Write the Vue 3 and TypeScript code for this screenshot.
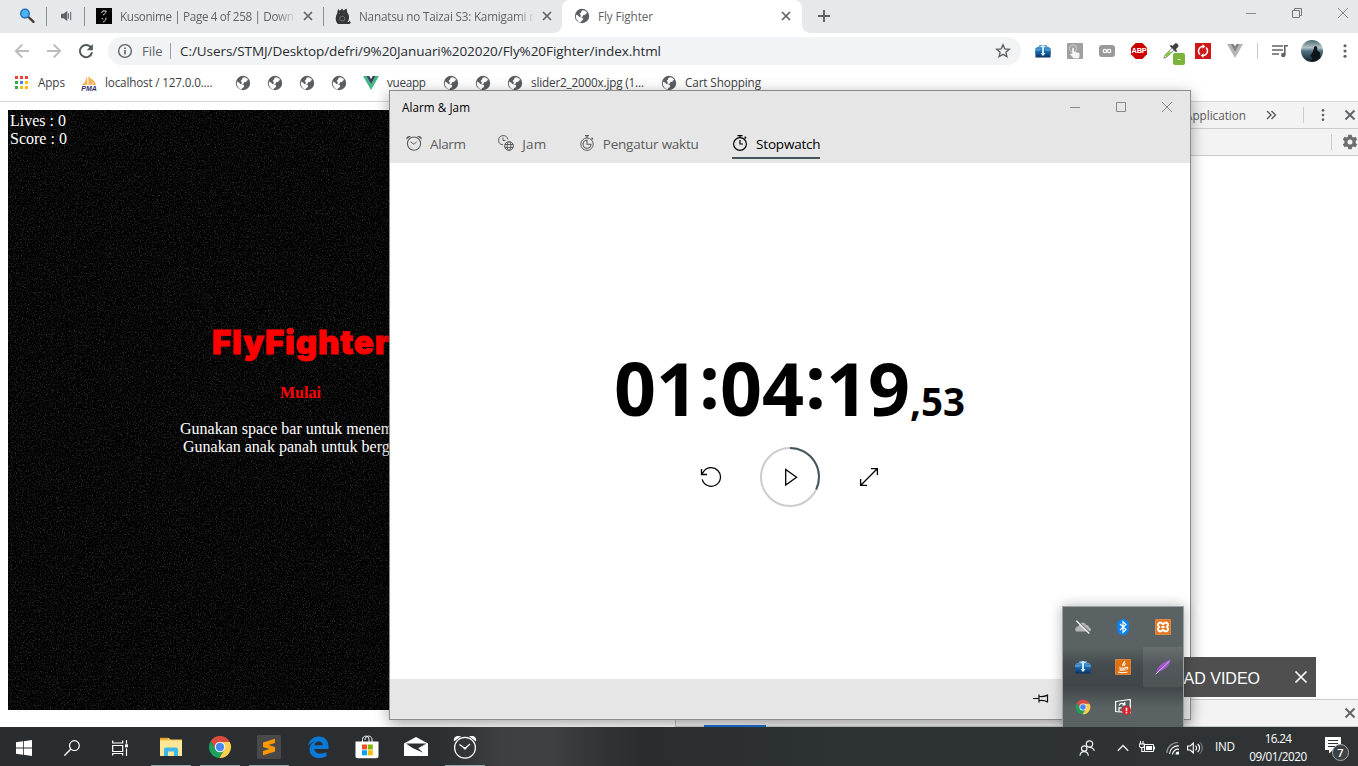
<script setup lang="ts">
import type { Directive } from 'vue'

// Spreads the letters of a label so that it takes exactly the given width.
const vFit: Directive<HTMLElement, number> = {
  mounted(el, { value }) {
    const range = document.createRange()
    range.selectNodeContents(el)
    const natural = range.getBoundingClientRect().width
    const count = (el.textContent ?? '').trim().length
    if (count > 1) el.style.letterSpacing = `${(value - natural) / (count - 1)}px`
  },
}

interface Item { icon?: string; text?: string; width?: number; size?: number }

const bookmarks: Item[] = [
  { icon: 'apps', size: 13 },
  { text: 'Apps', width: 27 },
  { icon: 'pma', size: 16 },
  { text: 'localhost / 127.0.0....', width: 107.5 },
  { icon: 'globe', size: 16 },
  { icon: 'globe', size: 16 },
  { icon: 'globe', size: 16 },
  { icon: 'globe', size: 16 },
  { icon: 'vue', size: 16 },
  { text: 'vueapp', width: 39 },
  { icon: 'globe', size: 16 },
  { icon: 'globe', size: 16 },
  { icon: 'globe', size: 16 },
  { text: 'slider2_2000x.jpg (1...', width: 113 },
  { icon: 'globe', size: 16 },
  { text: 'Cart Shopping', width: 76 },
]

const extensions = ['box', 'touch', 'infinity', 'abp', 'picker', 'reload-red', 'vue-grey']

const clockTabs = [
  { icon: 'alarm', text: 'Alarm', width: 36, active: false },
  { icon: 'worldclock', text: 'Jam', width: 24, active: false },
  { icon: 'timer', text: 'Pengatur waktu', width: 96, active: false },
  { icon: 'stopwatch', text: 'Stopwatch', width: 64.5, active: true },
]

const tray = ['cloud-off', 'bluetooth', 'xampp', 'box', 'java', 'feather', 'chrome', 'update']

const pinned = [
  { icon: 'folder', open: true },
  { icon: 'chrome', open: true },
  { icon: 'sublime', open: true },
  { icon: 'edge', open: false },
  { icon: 'store', open: false },
  { icon: 'mail', open: false },
  { icon: 'alarm-white', open: true },
]
</script>

<template>
  <div class="screen">
    <svg class="defs" width="0" height="0" aria-hidden="true">
      <defs>
        <linearGradient id="gBox" x1="0" y1="0" x2="0" y2="1"><stop offset="0" stop-color="#4a97d2" /><stop offset=".4" stop-color="#1b6bb0" /><stop offset="1" stop-color="#0a2f62" /></linearGradient>
        <linearGradient id="gSky" x1="0" y1="0" x2="0" y2="1"><stop offset="0" stop-color="#4b6870" /><stop offset=".35" stop-color="#b5c4c8" /><stop offset=".5" stop-color="#4f7184" /><stop offset="1" stop-color="#14202b" /></linearGradient>
        <linearGradient id="gSail" x1="0" y1="0" x2="0" y2="1"><stop offset="0" stop-color="#f4a33c" /><stop offset="1" stop-color="#f7b95c" /></linearGradient>
      </defs>
      <symbol id="i-globe" viewBox="0 0 16 16"><circle cx="8" cy="8" r="7.2" fill="#5b5e63" /><path d="M8.7 2.2c1.6-.2 3.7 1 4.6 2.8l-1.4.5-.5 1.2-1.9.4-1 1.7-2 .1.2-2-1.2-1.1 1.3-.7.4-1.600zM1.900 6.600l2.100.9 1.400 1.600 2.700.5 1.300 1.400-.8 1.300-1.400.9-.8 1.300C4 14 1.800 11.400 1.900 8.300z" fill="#fff" /></symbol>
      <symbol id="i-magnifier" viewBox="0 0 16 16"><path d="M9.5 9l5 4.800" stroke="#4b3b34" stroke-width="2.4" stroke-linecap="round" /><circle cx="6" cy="5.600" r="4.300" fill="#4cb3f5" stroke="#2b71b8" stroke-width="1.500" /></symbol>
      <symbol id="i-speaker" viewBox="0 0 16 16"><path d="M3 5.700h2.600l3.700-3v10.600L5.600 10.300H3z" fill="#5f6368" /><path d="M10.500 5.300v5.400M12.700 3.700v8.600" stroke="#6c7075" stroke-width="1.100" fill="none" /></symbol>
      <symbol id="i-kuso" viewBox="0 0 16 16"><path d="M0 0h16v16H0z" fill="#000" /><path d="M7 2.500L5.500 5M7 3h3.200c-.3 2-1.400 3.200-3.200 4M6 10l1 1.500M10 9.700c-.2 2.500-1 3.700-3 4.300" stroke="#ddd" stroke-width="1" fill="none" /></symbol>
      <symbol id="i-cat" viewBox="0 0 16 16"><path d="M3 1l2 1.700 2-2.200 1.500 2L11.500.5l.8 4c2.600 3 2 7 .3 9.500h1.200l.9-1.500 1 2-1 1.500H3C.3 13.500 0 9 2.200 5.500z" fill="#333539" /><path d="M4 5.500h1M8.500 5.200h1M5 9l3-1 2 2-1 3-4-.5z" stroke="#777" stroke-width=".8" fill="none" /></symbol>
      <symbol id="i-x" viewBox="0 0 16 16"><path d="M4 4l8 8M12 4l-8 8" stroke="#5f6368" stroke-width="1.700" fill="none" /></symbol>
      <symbol id="i-plus" viewBox="0 0 16 16"><path d="M8 2v12M2 8h12" stroke="#5f6368" stroke-width="1.900" /></symbol>
      <symbol id="i-min" viewBox="0 0 12 12"><path d="M1 6.500h10" stroke="#8a8a8a" stroke-width="1" /></symbol>
      <symbol id="i-max" viewBox="0 0 12 12"><path d="M1.500 1.500h9v9h-9z" stroke="#888" fill="none" /></symbol>
      <symbol id="i-restore" viewBox="0 0 12 12"><path d="M1.500 3.500h7v7h-7zM3.500 3.500v-2h7v7h-2" stroke="#777" fill="none" /></symbol>
      <symbol id="i-close" viewBox="0 0 12 12"><path d="M1 1l10 10M11 1L1 11" stroke="#888" fill="none" /></symbol>
      <symbol id="i-back" viewBox="0 0 16 16"><path d="M15 8H2M8.300 1.500L1.800 8l6.500 6.500" stroke="#babcbe" stroke-width="1.800" fill="none" /></symbol>
      <symbol id="i-forward" viewBox="0 0 16 16"><path d="M1 8h13M7.700 1.500L14.200 8l-6.500 6.500" stroke="#babcbe" stroke-width="1.800" fill="none" /></symbol>
      <symbol id="i-reload" viewBox="0 0 16 16"><path d="M13.300 5A6.100 6.100 0 1 0 14 9.200" stroke="#54575c" stroke-width="2" fill="none" /><path d="M14.900 1v6.200H8.700z" fill="#54575c" /></symbol>
      <symbol id="i-info" viewBox="0 0 16 16"><circle cx="8" cy="8" r="6.400" stroke="#5f6368" stroke-width="1.400" fill="none" /><path d="M8 7v4.600M8 4.400v1.600" stroke="#5f6368" stroke-width="1.600" /></symbol>
      <symbol id="i-star" viewBox="0 0 16 16"><path d="M8 1.800l1.800 4.100 4.500.4-3.400 2.900 1 4.400L8 11.300l-3.900 2.300 1-4.400-3.400-2.900 4.500-.4z" stroke="#5f6368" stroke-width="1.400" fill="none" /></symbol>
      <symbol id="i-box" viewBox="0 0 16 16"><path d="M3 4.500l1.500-2.500h7L13 4.500z" fill="#5f9cc9" /><path d="M0 6l2-2h12l2 2-.5 8.500H.5z" fill="url(#gBox)" /><path d="M0 7h5.500M10.500 7H16" stroke="#7db9e6" stroke-width=".9" /><path d="M5 3.500L8 2l3 1.500-2 1V10h1.500L8 13.300 5.500 10H7V4.500z" fill="#cdeaff" /></symbol>
      <symbol id="i-touch" viewBox="0 0 16 16"><rect width="16" height="16" rx="1" fill="#a0a0a0" /><circle cx="6" cy="5.500" r="3.600" stroke="#d0d0d0" fill="none" /><path d="M5.200 5.500c0-1.500 1.700-1.500 1.700 0v3.300l4.600.9c1 .3 1.300 1 1.100 2L12 15.300H6.500L3 11.200c0-1 1-1 2.200 0z" fill="#f5f5f5" /></symbol>
      <symbol id="i-infinity" viewBox="0 0 16 16"><rect y="2" width="16" height="12" rx="3" fill="#999" /><circle cx="5.900" cy="8" r="1.700" stroke="#fff" stroke-width="1.200" fill="none" /><circle cx="10.100" cy="8" r="1.700" stroke="#fff" stroke-width="1.200" fill="none" /></symbol>
      <symbol id="i-abp" viewBox="0 0 16 16"><path d="M4.700 0h6.600L16 4.700v6.600L11.300 16H4.700L0 11.300V4.700z" fill="#cb0000" /></symbol>
      <symbol id="i-picker" viewBox="0 0 16 16"><path d="M9.200 5L1.800 12.300.8 15.200l2.900-1 7.400-7.300" stroke="#888" fill="#fff" /><path d="M7.500 9L2.700 13.400" stroke="#7fcc35" stroke-width="2.400" /><path d="M6.800 3l6.200 6.200 1.200-1.200-1.400-1.700 2.300-2.200C16.500 2.300 13.800-.5 12 .6L9.500 3 8 1.800z" fill="#3e403e" /></symbol>
      <symbol id="i-reload-red" viewBox="0 0 16 16"><path d="M0 0h16v16H0z" fill="#cf1717" /><path d="M5 11.400A4.600 4.600 0 0 1 8 3.400M11 4.600a4.600 4.600 0 0 1-3 8" stroke="#fff" stroke-width="1.400" fill="none" /><path d="M7.500 1v4.800L10.300 3.400zM8.500 15v-4.800L5.700 12.600z" fill="#fff" /></symbol>
      <symbol id="i-vue-grey" viewBox="0 0 16 16"><path d="M0 1h3.500L8 9l4.500-8H16L8 15z" fill="#b5b5b5" /><path d="M3.500 1h3L8 3.600 9.500 1h3L8 9z" fill="#808080" /></symbol>
      <symbol id="i-vue" viewBox="0 0 16 16"><path d="M0 1h3.300L8 9.200 12.700 1H16L8 15z" fill="#41b883" /><path d="M3.300 1h3L8 4l1.700-3h3L8 9.200z" fill="#35495e" /></symbol>
      <symbol id="i-playlist" viewBox="0 0 18 16"><path d="M1 3h11M1 7h11M1 11h7" stroke="#5f6368" stroke-width="1.600" /><path d="M13.800 12V2.800H17" stroke="#5f6368" stroke-width="1.600" fill="none" /><circle cx="12.300" cy="12" r="2.200" fill="#5f6368" /></symbol>
      <symbol id="i-avatar" viewBox="0 0 22 22"><circle cx="11" cy="11" r="11" fill="url(#gSky)" /><path d="M13 8.500c-.8-2.700 3.300-3.300 3.300-.5l-.2 2.200 2.900 2.300.4 5.500L14 21l-3.500.6.500-4-2-1.600 2.500-3.500z" fill="#10151c" /></symbol>
      <symbol id="i-dots" viewBox="0 0 16 16"><circle cx="8" cy="2.700" r="1.550" fill="#5f6368" /><circle cx="8" cy="8" r="1.550" fill="#5f6368" /><circle cx="8" cy="13.300" r="1.550" fill="#5f6368" /></symbol>
      <symbol id="i-apps" viewBox="0 0 13 13"><path d="M0 0h3v3H0zM5 0h3v3H5zM10 0h3v3h-3z" fill="#ea4335" /><path d="M0 5h3v3H0z" fill="#34a853" /><path d="M5 5h3v3H5z" fill="#4285f4" /><path d="M10 5h3v3h-3zM5 10h3v3H5zM10 10h3v3h-3z" fill="#fbbc05" /><path d="M0 10h3v3H0z" fill="#34a853" /></symbol>
      <symbol id="i-pma" viewBox="0 0 16 16"><path d="M6 .5C5.800 4 4 7.500.8 10H6.500zM7.500 1c3 3 4 6 3.600 9H7.500zM10 3.500c3 1.500 4.500 4 5 6.500h-3z" fill="url(#gSail)" /></symbol>
      <symbol id="i-gear" viewBox="0 0 16 16"><path d="M6.300.8h3.400l.4 2 1.400.8 2-.8 1.700 2.800L13.600 7v2l1.600 1.400-1.700 2.800-2-.8-1.400.8-.4 2H6.300l-.4-2-1.400-.8-2 .8L.8 10.400 2.400 9V7L.8 5.600l1.700-2.800 2 .8 1.400-.8z" fill="#6e6e6e" /><circle cx="8" cy="8" r="2.500" fill="#f3f3f3" /></symbol>
      <symbol id="i-more" viewBox="0 0 12 12"><path d="M2 2l4 4-4 4M6.500 2l4 4-4 4" stroke="#5a5a5a" stroke-width="1.400" fill="none" /></symbol>

      <symbol id="i-alarm" viewBox="0 0 16 16"><circle cx="8" cy="8.600" r="6.600" stroke="currentColor" stroke-width="1.100" fill="none" /><path d="M4.500 6.800L8 9.300l2.800-2.800" stroke="currentColor" fill="none" /><path d="M.4 4.500C-.2 2 1.800.3 5 1.300zM15.600 4.500c.6-2.500-1.400-4.200-4.600-3.200z" fill="currentColor" /></symbol>
      <symbol id="i-worldclock" viewBox="0 0 16 16"><path d="M5 9.800A4.600 4.600 0 1 1 9.800 4.500M5 2.500v3h2.500" stroke="currentColor" fill="none" /><g stroke="currentColor" fill="none"><circle cx="11" cy="11" r="4.400" /><ellipse cx="11" cy="11" rx="1.900" ry="4.400" /><path d="M6.800 9.500h8.400M6.800 12.500h8.400" /></g></symbol>
      <symbol id="i-timer" viewBox="0 0 16 16"><circle cx="8" cy="9.200" r="6.200" stroke="currentColor" fill="none" /><path d="M8 5.200a4 4 0 1 0 4 4H8zM6 .6h4M8 .6V3M12.600 2.700l1.500 1.500M12.300 4.400l1-1" stroke="currentColor" stroke-width="1.100" fill="none" /></symbol>
      <symbol id="i-stopwatch" viewBox="0 0 16 16"><circle cx="8" cy="9" r="6.400" stroke="currentColor" stroke-width="1.150" fill="none" /><path d="M8 5v4h3M5.500.7h5M8 .7v2M12.500 3.500l1-1M12.700 1.700l1.500 1.500" stroke="currentColor" stroke-width="1.200" fill="none" /></symbol>
      <symbol id="i-reset" viewBox="0 0 22 22"><path d="M2.200 13.300A9.300 9.300 0 1 0 3.200 6.200L1.500 8.400M1.500 3v5.500H7" stroke="#000" stroke-width="1.300" fill="none" /></symbol>
      <symbol id="i-play" viewBox="0 0 60 60"><circle cx="30" cy="30" r="29" stroke="#ccc" stroke-width="2" fill="none" /><path d="M30 1a29 29 0 0 1 26.200 41.400" stroke="#46545b" stroke-width="2" fill="none" /><path d="M25.700 22.500v15.600L36.600 30.300z" stroke="#000" stroke-width="1.300" fill="none" /></symbol>
      <symbol id="i-expand" viewBox="0 0 20 20"><path d="M1.800 18.200L18.200 1.800M12 1.600h6.400V8M1.600 12v6.400H8" stroke="#000" stroke-width="1.300" fill="none" /></symbol>
      <symbol id="i-pin" viewBox="0 0 16 12"><path d="M0 5.500h6M6 1.500v8M6 3.200c2 .6 5 .6 8.500-1.100v6.800C11 7.200 8 7.200 6 7.800" stroke="#111" stroke-width="1.200" fill="none" /></symbol>

      <symbol id="i-cloud-off" viewBox="0 0 16 16"><path d="M1 12.500c-1.800-2.500.2-5.500 2.500-5.300C4.500 2.800 9.500 2.500 11 6c2.500-.2 2.800 1.200 2.600 2.200 2.600.3 3 2.800 1.400 4.300z" fill="#b4b6b6" /><path d="M2.300 1.700l13 12.300" stroke="#5d6466" stroke-width="1.200" /><path d="M1.300 1.800l13 12.700" stroke="#f2f2f2" stroke-width="1.300" /></symbol>
      <symbol id="i-bluetooth" viewBox="0 0 16 16"><rect x="2" width="12" height="16" rx="6" fill="#0a83f0" /><path d="M5 5l6 5.600L8 13.300V2.700L11 5.400 5 11" stroke="#fff" stroke-width="1.200" fill="none" /></symbol>
      <symbol id="i-xampp" viewBox="0 0 16 16"><rect x=".3" y=".3" width="15.400" height="15.400" rx="1" fill="#e87722" stroke="#f2a45e" stroke-width=".6" /><path d="M4.300 3.800h1.900L8 5.300l1.800-1.500h1.900L13 5.200v1.300L11.800 8 13 9.500v1.300l-1.300 1.400H9.800L8 10.700l-1.800 1.500H4.300L3 10.800V9.500L4.200 8 3 6.500V5.200zM6.500 8h3" stroke="#fff" stroke-width="1.900" fill="none" /></symbol>
      <symbol id="i-java" viewBox="0 0 16 16"><rect x=".3" y=".3" width="15.400" height="15.400" rx="1" fill="#e2700e" stroke="#f5a25a" stroke-width=".6" /><path d="M9.600 2c.5 1.500-3 2.600-1.700 5M10.700 4.500c-2 1-1.500 1.700-1 2.500M4 8.500c2 1 5 .7 7 .1M4.500 10.600c2 .7 4 .6 6 .1M3 13c3 1 7 .7 9.500 0M11 8.500c2.500-.7 2 1.600.5 2" stroke="#fff" stroke-width="1.150" fill="none" /></symbol>
      <symbol id="i-feather" viewBox="0 0 16 16"><path d="M.8 15.200C1.500 8 7.500 3 15.300.6c.2 6.400-5.500 11.500-12.200 11.700z" fill="#9a58c6" /><path d="M.8 15.200L14.500 2" stroke="#e0b8f2" stroke-width="1" /></symbol>
      <symbol id="i-chrome" viewBox="0 0 24 24"><path d="M2.770 6A11 11 0 0 1 21.800 7H12l-4.330 7.500z" fill="#dd4b3e" /><path d="M2.770 6a11 11 0 0 0 8.660 17l4.900-8.500H7.670z" fill="#1fa15d" /><path d="M21.800 7a11 11 0 0 1-10.370 16l4.900-8.500L12 7z" fill="#fed04f" /><circle cx="12" cy="12" r="5.300" fill="#f4f4f4" /><circle cx="12" cy="12" r="4.200" fill="#4688f1" /></symbol>
      <symbol id="i-update" viewBox="0 0 16 16"><path d="M.6 2.500l14.700-2v13L.6 12.500z" stroke="#fff" stroke-width="1.200" fill="none" /><path d="M4 6.500c1-2.500 4-2.700 5.500-1M9.800 3v3H7.200M4 12V8.800h2.700" stroke="#fff" stroke-width="1.200" fill="none" /><circle cx="11.500" cy="11.500" r="4.500" fill="#d9202c" /><path d="M11.500 8.800v3.400M11.500 13v1.400" stroke="#fff" stroke-width="1.500" /></symbol>

      <symbol id="i-windows" viewBox="0 0 16 16"><path d="M0 2.300l7-1v6.300H0zM7.800 1.200L16 0v7.600H7.800zM0 8.400h7v6.300l-7-1zM7.800 8.400H16V16l-8.200-1.200z" fill="#fff" /></symbol>
      <symbol id="i-search" viewBox="0 0 16 16"><circle cx="10.400" cy="5.600" r="4.900" stroke="#fff" stroke-width="1.200" fill="none" /><path d="M6.900 9.100L.4 15.600" stroke="#fff" stroke-width="1.400" /></symbol>
      <symbol id="i-taskview" viewBox="0 0 16 16"><path d="M.7.500V3h10V.5M.7 5.500h10v6H.7zM.7 15.500V13.500h10v2M14.500 0v3.800M14.500 8.500V16" stroke="#fff" stroke-width="1.200" fill="none" /><path d="M13 4.300h3v3h-3z" fill="#fff" /></symbol>
      <symbol id="i-folder" viewBox="0 0 24 24"><path d="M1 3h9l1.500 1.500H23V21H1z" fill="#f3c74f" /><path d="M1 5.500h22V21H1z" fill="#ffe797" /><path d="M1 3.500h8M4 3.700h2" stroke="#e49d23" stroke-width="1.400" /><path d="M5 14.500q0-2 2-2h10q2 0 2 2V21h-4v-4.500H9V21H5z" fill="#3cb7ec" /></symbol>
      <symbol id="i-sublime" viewBox="0 0 24 24"><rect width="24" height="24" rx="1.500" fill="#4a4949" /><path d="M6 7.500l12-3.700v4.100l-6.500 2 6.500 2.100v4.500L6 20.300v-4.200l6.500-2L6 12z" fill="#ff9800" /></symbol>
      <symbol id="i-edge" viewBox="0 0 24 24"><path d="M2 11.200C3 5 7.200 1.500 12.800 1.500c6 0 9.700 4.100 9.700 9.700v2.700H8.300c.2 5.200 8.200 5.600 12.200 3.100v4.300c-7 3.800-17 1.600-17-6.900 0-4.100 2.600-7.200 6.400-8.200C6.600 6.400 4 8.200 2 11.200zm6.500-1h8.200c0-5-7.400-4.800-8.200 0z" fill="#0a78d7" /></symbol>
      <symbol id="i-store" viewBox="0 0 24 24"><path d="M7.500 7V4.500C7.500 0 14 0 14 4.500V7M10 5C10-.2 17 0 17 4.500V7" stroke="#fff" stroke-width="1" fill="none" /><path d="M.5 6.500h23v14.800q0 2-2 2h-19q-2 0-2-2z" fill="#fff" /><path d="M7 9.500h5v5H7z" fill="#f25022" /><path d="M12.800 9.500h5v5h-5z" fill="#7fba00" /><path d="M7 15.300h5v5H7z" fill="#00a4ef" /><path d="M12.800 15.300h5v5h-5z" fill="#ffb900" /></symbol>
      <symbol id="i-mail" viewBox="0 0 24 24"><path d="M12 2l12 6.500V21H0V8.500z" fill="#fff" /><path d="M2 8.500h20.500l-8.300 4.700 5 4.500L8.500 13z" fill="#2b2f32" /></symbol>
      <symbol id="i-alarm-white" viewBox="0 0 24 24"><circle cx="12" cy="12.800" r="10.400" stroke="#fff" stroke-width="1.200" fill="none" /><path d="M6.500 9.500l5.500 4L17 9" stroke="#fff" stroke-width="1.300" fill="none" /><circle cx="12" cy="13.200" r="1.300" fill="#fff" /><path d="M1 6.500C0 2 3.500 0 8 1.300zM23 6.500C24 2 20.500 0 16 1.300z" fill="#fff" /></symbol>

      <symbol id="i-people" viewBox="0 0 16 16"><g stroke="#eee" stroke-width="1.200" fill="none"><circle cx="10.500" cy="4" r="3.200" /><path d="M15.200 11c-.3-3-3-4-5.500-3.600" /><circle cx="5.200" cy="8.500" r="2.700" /><path d="M1 15.700c.3-5.500 8-5.500 8.300 0" /></g></symbol>
      <symbol id="i-chevron" viewBox="0 0 12 12"><path d="M.8 8.800L6 3.500l5.200 5.300" stroke="#eee" stroke-width="1.300" fill="none" /></symbol>
      <symbol id="i-battery" viewBox="0 0 16 14"><path d="M5.500 3.500h9v7h-9z" stroke="#fff" stroke-width="1" fill="none" /><path d="M7 5h6v4H7zM14.500 5.500H16v3h-1.500z" fill="#fff" /><path d="M1.500 0v3M4 0v3M.3 3h5v2.300l-1 1.200H1.500L.3 5.300zM2.800 6.500v4H5" stroke="#fff" stroke-width="1.100" fill="none" /></symbol>
      <symbol id="i-wifi" viewBox="0 0 14 14"><path d="M.8 12A11 11 0 0 1 12 1.500" stroke="#929697" stroke-width="1.200" fill="none" /><path d="M3.500 13A8.300 8.300 0 0 1 13 5M6.500 13.500A5.500 5.500 0 0 1 13 8.300" stroke="#fff" stroke-width="1.200" fill="none" /><path d="M9.500 13.500a2.800 2.800 0 0 1 3.500-3v3z" fill="#fff" /></symbol>
      <symbol id="i-volume" viewBox="0 0 16 14"><path d="M.6 5h2.700l3-3v10l-3-3H.6zM8.500 4.600c1.300 1.400 1.300 3.400 0 4.800M10.700 3c2.500 2.300 2.500 5.700 0 8" stroke="#fff" stroke-width="1.100" fill="none" /><path d="M12.800 1.200c3.300 3.300 3.300 8.300 0 11.600" stroke="#858a8c" fill="none" /></symbol>
      <symbol id="i-note" viewBox="0 0 24 24"><path d="M0 0h16v13H8l-4 3.500V13H0z" fill="#fff" /><path d="M3 3.500h10M3 6.500h10M3 9.500h7" stroke="#303436" /></symbol>
    </svg>

    <div class="browser">
      <header class="tabstrip">
        <div class="pinned"><svg width="16" height="16"><use href="#i-magnifier" /></svg></div>
        <div class="pinned second"><svg width="16" height="16"><use href="#i-speaker" /></svg></div>
        <div class="tab">
          <svg width="16" height="16"><use href="#i-kuso" /></svg>
          <span class="label faded"><span v-fit="174">Kusonime | Page 4 of 258 | Down</span></span>
          <svg width="16" height="16"><use href="#i-x" /></svg>
        </div>
        <div class="tab separated">
          <svg width="16" height="16"><use href="#i-cat" /></svg>
          <span class="label faded"><span v-fit="175">Nanatsu no Taizai S3: Kamigami r</span></span>
          <svg width="16" height="16"><use href="#i-x" /></svg>
        </div>
        <div class="tab current">
          <svg width="16" height="16"><use href="#i-globe" /></svg>
          <span class="label"><span v-fit="55">Fly Fighter</span></span>
          <svg width="16" height="16"><use href="#i-x" /></svg>
        </div>
        <div class="newtab"><svg width="16" height="16"><use href="#i-plus" /></svg></div>
        <div class="wincontrols">
          <svg width="12" height="12"><use href="#i-min" /></svg>
          <svg width="12" height="12"><use href="#i-restore" /></svg>
          <svg width="12" height="12"><use href="#i-close" /></svg>
        </div>
      </header>

      <div class="toolbar">
        <svg width="16" height="16"><use href="#i-back" /></svg>
        <svg width="16" height="16"><use href="#i-forward" /></svg>
        <svg width="16" height="16"><use href="#i-reload" /></svg>
        <div class="omnibox">
          <svg width="16" height="16"><use href="#i-info" /></svg>
          <span class="scheme"><span v-fit="20.500">File</span></span>
          <span class="bar"></span>
          <span class="url"><span v-fit="481">C:/Users/STMJ/Desktop/defri/9%20Januari%202020/Fly%20Fighter/index.html</span></span>
          <svg width="16" height="16"><use href="#i-star" /></svg>
        </div>
        <div v-for="e in extensions" :key="e" class="ext">
          <svg width="16" height="16"><use :href="`#i-${e}`" /></svg>
          <span v-if="e === 'picker'" class="badge">-</span>
          <span v-if="e === 'abp'" class="abp">ABP</span>
        </div>
        <span class="divider"></span>
        <svg width="18" height="16"><use href="#i-playlist" /></svg>
        <svg width="22" height="22"><use href="#i-avatar" /></svg>
        <svg width="16" height="16"><use href="#i-dots" /></svg>
      </div>

      <nav class="bookmarks">
        <template v-for="(b, i) in bookmarks" :key="i">
          <span v-if="b.icon" class="bm-icon">
            <svg :width="b.size" :height="b.size"><use :href="`#i-${b.icon}`" /></svg>
            <span v-if="b.icon === 'pma'" class="pma">PMA</span>
          </span>
          <span v-else class="bm"><span v-fit="b.width ?? 0">{{ b.text }}</span></span>
        </template>
      </nav>

      <main class="page">
        <section class="viewport">
          <div class="game">
            <svg class="stars" width="382" height="600">
              <filter id="noise" x="0" y="0" width="100%" height="100%" color-interpolation-filters="sRGB">
                <feTurbulence type="fractalNoise" baseFrequency=".83 .62" numOctaves="3" seed="7" />
                <feColorMatrix values=".5 0 0 0 -.235  .5 0 0 0 -.235  .5 0 0 0 -.235  0 0 0 0 1" />
              </filter>
              <rect width="382" height="600" filter="url(#noise)" />
            </svg>
            <div class="stats">
              <div>Lives : 0</div>
              <div>Score : 0</div>
            </div>
            <div class="intro">
              <h1><span v-fit="177">FlyFighter</span></h1>
              <div class="start">Mulai</div>
              <p class="first">Gunakan space bar untuk menem</p>
              <p class="second-line">Gunakan anak panah untuk berg</p>
            </div>
          </div>
        </section>
        <aside class="devtools">
          <div class="dt-tabs">
            <span class="dt-label"><span v-fit="61">Application</span></span>
            <svg width="12" height="12"><use href="#i-more" /></svg>
            <span class="dt-sep"></span>
            <svg width="14" height="14"><use href="#i-dots" /></svg>
            <svg width="18" height="18"><use href="#i-x" /></svg>
          </div>
          <div class="dt-tools">
            <span class="dt-sep"></span>
            <svg width="16" height="16"><use href="#i-gear" /></svg>
          </div>
          <div class="dt-body"></div>
          <div class="dt-drawer">
            <span class="drawer-tab"></span>
            <svg width="18" height="18"><use href="#i-x" /></svg>
          </div>
        </aside>
      </main>
    </div>

    <div class="window">
      <div class="w-head">
        <div class="w-title">
          <span v-fit="68">Alarm &amp; Jam</span>
          <div class="w-controls">
            <svg width="12" height="12"><use href="#i-min" /></svg>
            <svg width="12" height="12"><use href="#i-max" /></svg>
            <svg width="12" height="12"><use href="#i-close" /></svg>
          </div>
        </div>
        <div class="w-tabs">
          <div v-for="t in clockTabs" :key="t.text" class="w-tab" :class="{ active: t.active }">
            <svg width="16" height="16"><use :href="`#i-${t.icon}`" /></svg>
            <span v-fit="t.width">{{ t.text }}</span>
          </div>
        </div>
      </div>
      <div class="w-body">
        <div class="time">
          <span class="pair">01</span><span class="colon">:</span><span class="pair">04</span><span class="colon">:</span><span class="pair">19</span><span class="fraction">,53</span>
        </div>
        <div class="actions">
          <svg width="22" height="22"><use href="#i-reset" /></svg>
          <svg width="60" height="60"><use href="#i-play" /></svg>
          <svg width="20" height="20"><use href="#i-expand" /></svg>
        </div>
      </div>
      <div class="w-foot"><svg width="16" height="12"><use href="#i-pin" /></svg></div>
    </div>

    <div class="download">
      <span>DOWNLOAD VIDEO</span>
      <svg width="16" height="16" viewBox="0 0 16 16"><path d="M2.500 2.500l11 11M13.500 2.500l-11 11" stroke="#fff" stroke-width="1.700" /></svg>
    </div>

    <div class="tray">
      <div v-for="(t, i) in tray" :key="i" class="cell" :class="{ hover: t === 'feather' }">
        <svg width="16" height="16"><use :href="`#i-${t}`" /></svg>
      </div>
    </div>

    <footer class="taskbar">
      <div class="system">
        <svg width="16" height="16"><use href="#i-windows" /></svg>
        <svg width="16" height="16"><use href="#i-search" /></svg>
        <svg width="16" height="16"><use href="#i-taskview" /></svg>
      </div>
      <div v-for="p in pinned" :key="p.icon" class="app" :class="{ open: p.open }">
        <svg width="24" height="24"><use :href="`#i-${p.icon}`" /></svg>
      </div>
      <div class="status">
        <svg width="16" height="16"><use href="#i-people" /></svg>
        <svg width="12" height="12"><use href="#i-chevron" /></svg>
        <svg width="16" height="14"><use href="#i-battery" /></svg>
        <svg width="14" height="14"><use href="#i-wifi" /></svg>
        <svg width="16" height="14"><use href="#i-volume" /></svg>
        <span class="lang"><span v-fit="20">IND</span></span>
        <div class="clock"><span v-fit="27">16.24</span><span v-fit="58">09/01/2020</span></div>
        <div class="note">
          <svg width="24" height="24"><use href="#i-note" /></svg>
          <span class="count">7</span>
        </div>
      </div>
    </footer>
  </div>
</template>

<style>
html, body { background: #fff; overflow: hidden; }
</style>

<style scoped>
.screen {
  position: relative;
  display: flex;
  flex-direction: column;
  width: 1358px;
  height: 766px;
  overflow: hidden;
  font-family: "Open Sans", "Noto Sans", sans-serif;
  font-size: 11.700px;
  white-space: nowrap;
}
.screen * { box-sizing: border-box; }
.defs { position: absolute; }
svg { display: block; flex: none; }

.browser { display: flex; flex-direction: column; height: 727px; background: #fff; }
.tabstrip { display: flex; height: 33px; background: #e5e9ec; color: #5f6368; }
.pinned { display: flex; align-items: center; justify-content: flex-end; width: 48px; height: 33px; padding: 0 13px 1px 0; background: linear-gradient(#8d9194, #8d9194) right 1px top 7px / 1px 19px no-repeat; }
.second { width: 38px; padding-right: 12px; }
.tab { display: flex; align-items: center; width: 238px; padding: 0 8px 1px 10px; }
.tab .label { flex: 1; margin: -1px 0 0 8px; overflow: hidden; line-height: 20px; }
.faded { -webkit-mask-image: linear-gradient(90deg, #000 87%, transparent 98%); mask-image: linear-gradient(90deg, #000 87%, transparent 98%); }
.separated { position: relative; padding: 0 7px 1px 11px; }
.separated::before { content: ""; position: absolute; left: -1px; top: 7px; width: 1px; height: 19px; background: #8d9194; }
.current { position: relative; width: 240px; padding: 0 8px 1px 12px; background: #fff; border-radius: 8px 8px 0 0; }
.current::before, .current::after { content: ""; position: absolute; bottom: 0; width: 8px; height: 8px; }
.current::before { left: -8px; background: radial-gradient(circle at 0 0, #e5e9ec 7.500px, #fff 8px); }
.current::after { right: -8px; background: radial-gradient(circle at 100% 0, #e5e9ec 7.500px, #fff 8px); }
.newtab { display: flex; align-items: center; padding: 0 0 1px 14px; }
.wincontrols { display: flex; gap: 34px; margin-left: auto; padding: 7px 9px 0 0; }

.toolbar {
  display: grid;
  grid-template-columns: 32px 32px 32px 6px 913px 6px repeat(7, 32px) 12px 34px 30px 36px;
  height: 36px;
  padding-left: 6px;
  align-items: center;
  justify-items: center;
}
.omnibox { grid-column: 5; display: grid; grid-template-columns: 34px 28px 10px 1fr 36px; align-items: center; justify-items: center; width: 913px; height: 28px; border-radius: 14px; background: #f1f3f4; font-size: 13.500px; }
.ext { position: relative; }
.ext:nth-child(5) { grid-column: 7; }
.scheme { justify-self: start; color: #5f6368; font-size: 13px; }
.bar { justify-self: start; width: 1px; height: 16px; background: #9a9da1; }
.url { justify-self: start; color: #2a2c30; }
.badge { position: absolute; left: 10px; top: 10px; width: 12px; height: 12px; border-radius: 2px; background: #7cb33b; color: #fff; font-size: 10px; line-height: 10px; text-align: center; }
.abp { position: absolute; left: -2px; top: 3px; width: 20px; color: #fff; font: 700 7.500px/10px "Liberation Sans", sans-serif; letter-spacing: -.3px; text-align: center; }
.divider { width: 1px; height: 16px; background: #c8cacc; }

.bookmarks {
  display: grid;
  grid-template-columns: 33px 35px 32px 122px repeat(5, 32px) 48px repeat(3, 32px) 122px 32px auto;
  height: 33px;
  padding: 0 0 5px 5px;
  align-items: center;
  justify-items: center;
  justify-content: start;
  border-bottom: 1px solid #d5d5d5;
  color: #3c4043;
}
.bm { justify-self: start; margin-top: -2px; }
.bm-icon { position: relative; }
.pma { position: absolute; left: -2px; top: 10px; width: 20px; color: #33336a; font: italic 700 7px/7px "Liberation Sans", sans-serif; text-align: center; }

.page { display: flex; flex: 1; min-height: 0; }
.viewport { width: 675px; padding: 8px; }
.game { position: relative; width: 382px; height: 600px; overflow: hidden; background: #050505; color: #fff; font-family: "Liberation Serif", serif; font-size: 16px; line-height: 18px; }
.stars { position: absolute; inset: 0; }
.stats { position: relative; padding: 2px; }
.intro { position: relative; padding-top: 172px; color: #fff; }
h1 { margin: 0 0 0 204px; color: red; font: 900 33px/40px Inter, sans-serif; -webkit-text-stroke: .8px red; }
.start { margin: 22px 0 0 272px; color: red; font-weight: 700; }
p { margin: 0; }
.first { margin: 18px 0 0 172px; }
.second-line { margin-left: 175px; }

.devtools { display: flex; flex: 1; flex-direction: column; border-left: 1px solid #c8c8c8; }
.dt-tabs, .dt-tools { display: flex; align-items: center; justify-content: flex-end; height: 27px; border-bottom: 1px solid #ccc; background: #f3f3f3; color: #5a5a5a; }
.dt-sep { width: 1px; height: 16px; background: #ccc; }
.dt-label { margin-right: 19px; }
.dt-tabs .dt-sep { margin: 0 12px 0 26px; }
.dt-tabs svg:last-child { margin: 0 -1px 0 11px; }
.dt-tools svg { margin: 0 0 0 10px; }
.dt-body { flex: 1; }
.dt-drawer { display: flex; align-items: center; justify-content: space-between; height: 28px; border-top: 1px solid #ccc; border-bottom: 1px solid #ccc; background: #f3f3f3; }
.dt-drawer svg { margin-right: -1px; }
.drawer-tab { align-self: flex-end; width: 62px; height: 2px; margin: 0 0 -1px 28px; background: #1a6fd8; }

.download { position: absolute; left: 1106px; top: 657px; display: flex; align-items: center; justify-content: space-between; width: 210px; height: 40px; padding: 0 7px 0 13px; background: #4f4f4f; color: #fff; font: 16px "Liberation Sans", sans-serif; }
.download span { width: 141px; direction: rtl; margin-top: 3px; }

.window { position: absolute; left: 389px; top: 90px; display: flex; flex-direction: column; width: 802px; height: 630px; border: 1px solid #8c8c8c; background: #fff; box-shadow: 0 4px 14px rgba(0, 0, 0, .36); }
.w-head { height: 72px; background: #e6e6e6; }
.w-title { display: flex; align-items: center; justify-content: space-between; height: 32px; padding: 0 17px 0 12px; color: #000; }
.w-controls { display: flex; gap: 34px; }
.w-tabs { display: flex; height: 40px; font-size: 13.500px; color: #5c5c5c; }
.w-tab { display: flex; align-items: center; gap: 8px; height: 36px; margin-left: 16px; padding: 5px 16.500px 0 0; }
.w-tab svg { margin-top: -2px; }
.w-tab.active { margin-left: 17px; padding-right: 0; color: #000; border-bottom: 2px solid #46545b; }
.w-tab.active span { margin-top: 2px; }
.w-tab.active svg { margin-top: 0; }
.w-body { flex: 1; }
.time { display: flex; align-items: baseline; height: 109px; margin: 175px 0 0 224px; font-weight: 700; font-size: 73.500px; line-height: 100px; color: #000; }
.pair { width: 85px; }
.colon { width: 21px; text-align: center; transform: translateY(-7px); }
.fraction { font-size: 38.500px; margin-left: -1px; }
.actions { display: grid; grid-template-columns: 79px 79px 79px; justify-content: center; justify-items: center; align-items: center; }
.w-foot { display: flex; align-items: center; height: 40px; padding-left: 643px; background: #e6e6e6; }

.tray { position: absolute; left: 1062px; top: 606px; display: grid; grid-template-columns: repeat(3, 40px); grid-auto-rows: 40px; width: 122px; height: 121px; border: 1px solid #9da1a2; border-bottom: 0; background: linear-gradient(180deg, transparent 34%, #454b4e 48%, #3f4548 66%, transparent 84%), #5b6264; box-shadow: 0 0 12px rgba(0, 0, 0, .3); }
.cell { display: grid; place-items: center; }
.hover { background: rgba(255, 255, 255, .08); }

.taskbar { position: relative; display: flex; height: 39px; background: linear-gradient(90deg, #292d30 0, #2b2f31 440px, #3d3f40 500px, #3e4041 550px, #323334 600px, #292d2f 645px, #2d3233 850px, #2f3335 1358px); color: #fff; }
.system { display: flex; align-items: center; gap: 32px; width: 146px; padding: 2px 0 0 16px; }
.app { display: grid; place-items: center; width: 49px; padding-top: 1px; }
.open { background: linear-gradient(#93a6ac, #93a6ac) 5px 38px / 40px 1px no-repeat; }
.status { display: flex; align-items: center; width: 279px; margin-left: auto; }
.status > svg { margin-top: 2px; }
.status > svg:nth-child(2) { margin-left: 22px; }
.status > svg:nth-child(3) { margin-left: 10px; }
.status > svg:nth-child(4) { margin-left: 11px; }
.status > svg:nth-child(5) { margin-left: 7px; }
.lang { width: 34px; margin: -1px 0 0 12px; }
.clock { display: flex; flex-direction: column; align-items: center; width: 58px; line-height: 18px; }
.note { position: relative; margin: 4px 0 0 18px; }
.count { position: absolute; left: 7px; top: 7px; width: 17px; height: 17px; border: 1px solid #aaa; border-radius: 50%; background: #3c4143; font-size: 11px; font-weight: 600; line-height: 15px; text-align: center; }
</style>
